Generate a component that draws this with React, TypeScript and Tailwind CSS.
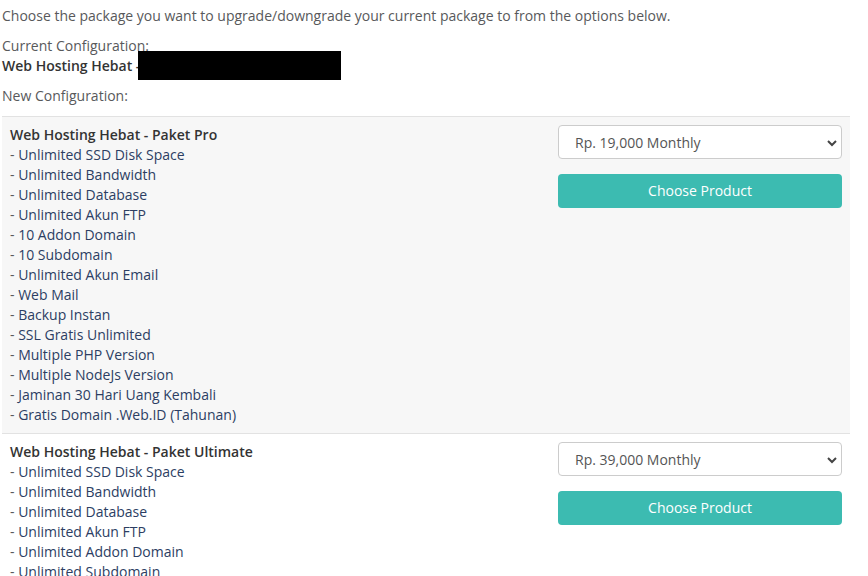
const products = [
  {
    name: 'Web Hosting Hebat - Paket Pro',
    price: 'Rp. 19,000 Monthly',
    features: [
      'Unlimited SSD Disk Space',
      'Unlimited Bandwidth',
      'Unlimited Database',
      'Unlimited Akun FTP',
      '10 Addon Domain',
      '10 Subdomain',
      'Unlimited Akun Email',
      'Web Mail',
      'Backup Instan',
      'SSL Gratis Unlimited',
      'Multiple PHP Version',
      'Multiple NodeJs Version',
      'Jaminan 30 Hari Uang Kembali',
      'Gratis Domain .Web.ID (Tahunan)',
    ],
    shaded: true,
  },
  {
    name: 'Web Hosting Hebat - Paket Ultimate',
    price: 'Rp. 39,000 Monthly',
    features: [
      'Unlimited SSD Disk Space',
      'Unlimited Bandwidth',
      'Unlimited Database',
      'Unlimited Akun FTP',
      'Unlimited Addon Domain',
      'Unlimited Subdomain',
      'Unlimited Akun Email',
      'Web Mail',
    ],
    shaded: false,
  },
];

export default function App() {
  return (
    <div className="h-[576px] overflow-hidden bg-white px-[2px] pt-[6px] text-[14px] leading-[20px] text-[#58595b] font-['Open_Sans',sans-serif]">
      <div className="w-[848px]">
        <p className="mb-[10px]">Choose the package you want to upgrade/downgrade your current package to from the options below.</p>

        {/* Current config */}
        <div className="relative mb-[10px]">
          <p>Current Configuration:</p>
          <p className="font-semibold text-[#333]">Web Hosting Hebat - xxxxxxxx</p>
          <div className="absolute left-[136px] top-[15px] h-[29px] w-[203px] bg-black" />
        </div>

        <p className="mb-[10px]">New Configuration:</p>

        {products.map((p) => (
          <div
            key={p.name}
            className={`flex border-t border-[#e2e2e2] pt-[8px] pb-[8px] ${p.shaded ? 'bg-[#f7f7f7]' : 'bg-white'}`}
          >
            <div className="flex-1 pl-[8px]">
              <p className="font-semibold text-[#333]">{p.name}</p>
              {p.features.map((f) => (
                <p key={f}>
                  <span>- </span>
                  <span className="text-[#2c3e63]">{f}</span>
                </p>
              ))}
            </div>
            <div className="w-[284px] mr-[8px] flex flex-col gap-[15px]">
              <div className="relative h-[34px] rounded-[4px] border border-[#ccc] bg-white">
                <span className="absolute left-[16px] top-[7px] text-[#555]">{p.price}</span>
                <svg
                  className="absolute right-[4px] top-[13px]"
                  width="10"
                  height="8"
                  viewBox="0 0 10 8"
                  fill="none"
                  stroke="#444"
                  strokeWidth="2"
                >
                  <path d="M1 2l4 4 4-4" />
                </svg>
              </div>
              <button className="h-[34px] rounded-[4px] bg-[#3cbbb1] text-white text-[14px]">Choose Product</button>
            </div>
          </div>
        ))}
      </div>
    </div>
  );
}
